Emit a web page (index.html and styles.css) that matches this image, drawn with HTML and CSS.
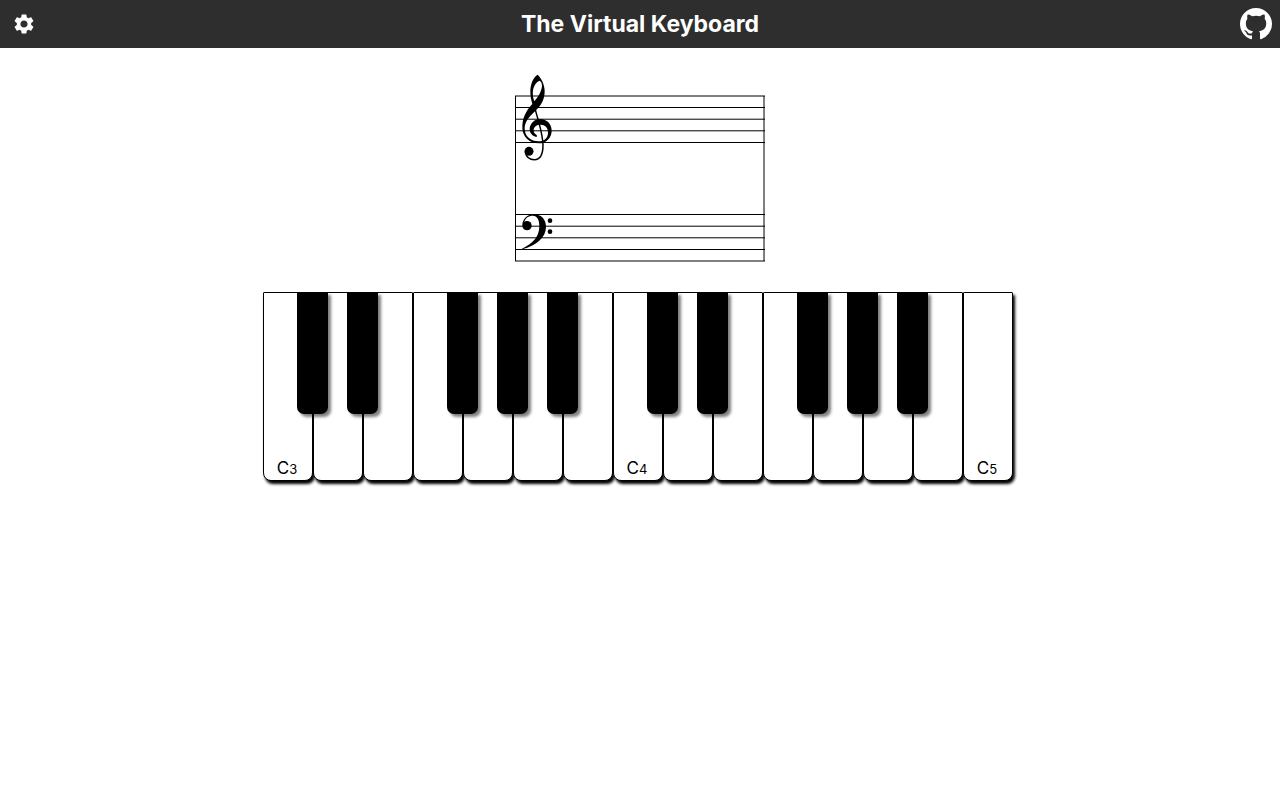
FILE: index.html
```html
<!DOCTYPE html>
<html lang="en">
<head>
<meta charset="utf-8">
<meta name="viewport" content="width=device-width, initial-scale=1">
<title>The Virtual Keyboard</title>
<link rel="stylesheet" href="styles.css">
</head>
<body>
<header class="topbar">
  <button class="icon-button" type="button" aria-label="Settings">
    <svg class="gear" viewBox="0 0 24 24" aria-hidden="true"><path d="M19.14 12.94c.04-.3.06-.61.06-.94 0-.32-.02-.64-.07-.94l2.03-1.58c.18-.14.23-.41.12-.61l-1.92-3.32c-.12-.22-.37-.29-.59-.22l-2.39.96c-.5-.38-1.03-.7-1.62-.94l-.36-2.54c-.04-.24-.24-.41-.48-.41h-3.84c-.24 0-.43.17-.47.41l-.36 2.54c-.59.24-1.13.57-1.62.94l-2.39-.96c-.22-.08-.47 0-.59.22L2.74 8.87c-.12.21-.08.47.12.61l2.03 1.58c-.05.3-.09.63-.09.94s.02.64.07.94l-2.03 1.58c-.18.14-.23.41-.12.61l1.92 3.32c.12.22.37.29.59.22l2.39-.96c.5.38 1.03.7 1.62.94l.36 2.54c.05.24.24.41.48.41h3.84c.24 0 .44-.17.47-.41l.36-2.54c.59-.24 1.13-.56 1.62-.94l2.39.96c.22.08.47 0 .59-.22l1.92-3.32c.12-.22.07-.47-.12-.61l-2.01-1.58zM12 15.6c-1.98 0-3.6-1.62-3.6-3.6s1.62-3.6 3.6-3.6 3.6 1.62 3.6 3.6-1.62 3.6-3.6 3.6z"/></svg>
  </button>
  <h1 class="title">The Virtual Keyboard</h1>
  <a class="icon-button" href="#" aria-label="GitHub">
    <svg class="github" viewBox="0 0 16 16" aria-hidden="true"><path d="M8 0C3.58 0 0 3.58 0 8c0 3.54 2.29 6.53 5.47 7.59.4.07.55-.17.55-.38 0-.19-.01-.82-.01-1.49-2.01.37-2.53-.49-2.69-.94-.09-.23-.48-.94-.82-1.13-.28-.15-.68-.52-.01-.53.63-.01 1.08.58 1.23.82.72 1.21 1.87.87 2.33.66.07-.52.28-.87.51-1.07-1.78-.2-3.64-.89-3.64-3.95 0-.87.31-1.59.82-2.15-.08-.2-.36-1.02.08-2.12 0 0 .67-.21 2.2.82.64-.18 1.32-.27 2-.27s1.36.09 2 .27c1.53-1.04 2.2-.82 2.2-.82.44 1.1.16 1.92.08 2.12.51.56.82 1.27.82 2.15 0 3.07-1.87 3.75-3.65 3.95.29.25.54.73.54 1.48 0 1.07-.01 1.93-.01 2.2 0 .21.15.46.55.38A8.01 8.01 0 0 0 16 8c0-4.42-3.58-8-8-8z"/></svg>
  </a>
</header>
<main class="content">
  <svg class="staff" viewBox="0 0 250 188" role="img" aria-label="Grand staff">
    <g class="staff-lines">
      <path d="M0 22H250M0 33.5H250M0 45.2H250M0 56.8H250M0 68.5H250"/>
      <path d="M0 140.5H250M0 152.2H250M0 163.8H250M0 175.5H250M0 187H250"/>
      <path d="M.5 22V187M249 22V187"/>
    </g>
    <g transform="translate(-5 -9) scale(.33333)">
      <path fill-rule="evenodd" d="M83 29C68 38 61 60 61 80C61 95 64 106 67 117C46 140 37 160 37 188C37 214 58 235 86 235C110 235 125 217 125 197C125 177 110 162 91 162C72 162 59 177 59 193C59 205 68 214 79 216C82 214 81 211 79 209C73 206 71 202 71 196C71 185 80 179 92 179C105 179 114 187 114 203C114 218 103 229 86 229C62 229 44 215 44 190C44 171 58 155 75 139C93 121 104 105 104 78C104 58 93 38 83 29ZM88 47C96 50 97 60 95 70C92 85 83 97 73 109C64 84 68 58 88 47Z"/>
      <path class="clef-stem" d="M70 110C75 135 81 151 86 170C92 192 98 217 99 240C99 268 91 284 73 284C60 284 49 276 46 262"/>
      <circle cx="57" cy="259" r="13.5"/>
    </g>
    <g transform="translate(-5 131) scale(.33333)">
      <path d="M37 60C38 42 52 28 71 28C95 28 108 44 108 66C108 98 78 122 37 133L36 131C65 118 88 98 88 64C88 45 82 32 68 32C56 32 46 38 43 52Z"/>
      <circle cx="51" cy="62" r="14"/>
      <circle cx="120" cy="47" r="7"/>
      <circle cx="120" cy="80" r="7"/>
    </g>
  </svg>
  <div class="keyboard">
    <div class="slot"><button class="white" type="button">C<small>3</small></button><button class="black" type="button" aria-label="C sharp 3"></button></div>
    <div class="slot"><button class="white" type="button" aria-label="D3"></button><button class="black" type="button" aria-label="D sharp 3"></button></div>
    <div class="slot"><button class="white" type="button" aria-label="E3"></button></div>
    <div class="slot"><button class="white" type="button" aria-label="F3"></button><button class="black" type="button" aria-label="F sharp 3"></button></div>
    <div class="slot"><button class="white" type="button" aria-label="G3"></button><button class="black" type="button" aria-label="G sharp 3"></button></div>
    <div class="slot"><button class="white" type="button" aria-label="A3"></button><button class="black" type="button" aria-label="A sharp 3"></button></div>
    <div class="slot"><button class="white" type="button" aria-label="B3"></button></div>
    <div class="slot"><button class="white" type="button">C<small>4</small></button><button class="black" type="button" aria-label="C sharp 4"></button></div>
    <div class="slot"><button class="white" type="button" aria-label="D4"></button><button class="black" type="button" aria-label="D sharp 4"></button></div>
    <div class="slot"><button class="white" type="button" aria-label="E4"></button></div>
    <div class="slot"><button class="white" type="button" aria-label="F4"></button><button class="black" type="button" aria-label="F sharp 4"></button></div>
    <div class="slot"><button class="white" type="button" aria-label="G4"></button><button class="black" type="button" aria-label="G sharp 4"></button></div>
    <div class="slot"><button class="white" type="button" aria-label="A4"></button><button class="black" type="button" aria-label="A sharp 4"></button></div>
    <div class="slot"><button class="white" type="button" aria-label="B4"></button></div>
    <div class="slot"><button class="white" type="button">C<small>5</small></button></div>
  </div>
</main>
</body>
</html>
```
FILE: styles.css
```css
* {
  box-sizing: border-box;
}

body {
  margin: 0;
  background: #fff;
  color: #000;
  font-family: Inter, "Liberation Sans", sans-serif;
}

.topbar {
  display: flex;
  align-items: center;
  justify-content: space-between;
  height: 48px;
  background: #2e2e2e;
  color: #fff;
}

.title {
  margin: 0;
  font-size: 23px;
  line-height: 32px;
  font-weight: 700;
}

.icon-button {
  display: flex;
  align-items: center;
  justify-content: center;
  width: 48px;
  height: 48px;
  padding: 0;
  border: 0;
  background: none;
  color: inherit;
  cursor: pointer;
}

.icon-button svg {
  fill: currentColor;
}

.gear {
  width: 24px;
  height: 24px;
}

.github {
  width: 32px;
  height: 32px;
}

.content {
  display: flex;
  flex-direction: column;
  align-items: center;
  gap: 30px;
  padding: 26px 16px;
}

.staff {
  width: 250px;
  overflow: visible;
}

.staff-lines,
.clef-stem {
  fill: none;
  stroke: #000;
}

.clef-stem {
  stroke-width: 4.5;
}

.keyboard {
  display: flex;
  padding-right: 4px;
}

.slot {
  position: relative;
  width: 50px;
}

.white {
  display: flex;
  align-items: last baseline;
  justify-content: center;
  width: 100%;
  height: 189px;
  padding: 0 2px 0 0;
  border: 1px solid #000;
  border-radius: 1px 1px 8px 8px;
  background: #fff;
  box-shadow: 2px 3px 3px #000;
  color: #000;
  font-family: inherit;
  font-size: 17px;
  line-height: 22px;
}

.white small {
  font-size: 13px;
}

.black {
  position: absolute;
  z-index: 1;
  top: 0;
  right: -15px;
  width: 31px;
  height: 122px;
  padding: 0;
  border: 0;
  border-radius: 0 0 7px 7px;
  background: #000;
  box-shadow: 3px 3px 3px rgba(0, 0, 0, 0.5);
}
```
